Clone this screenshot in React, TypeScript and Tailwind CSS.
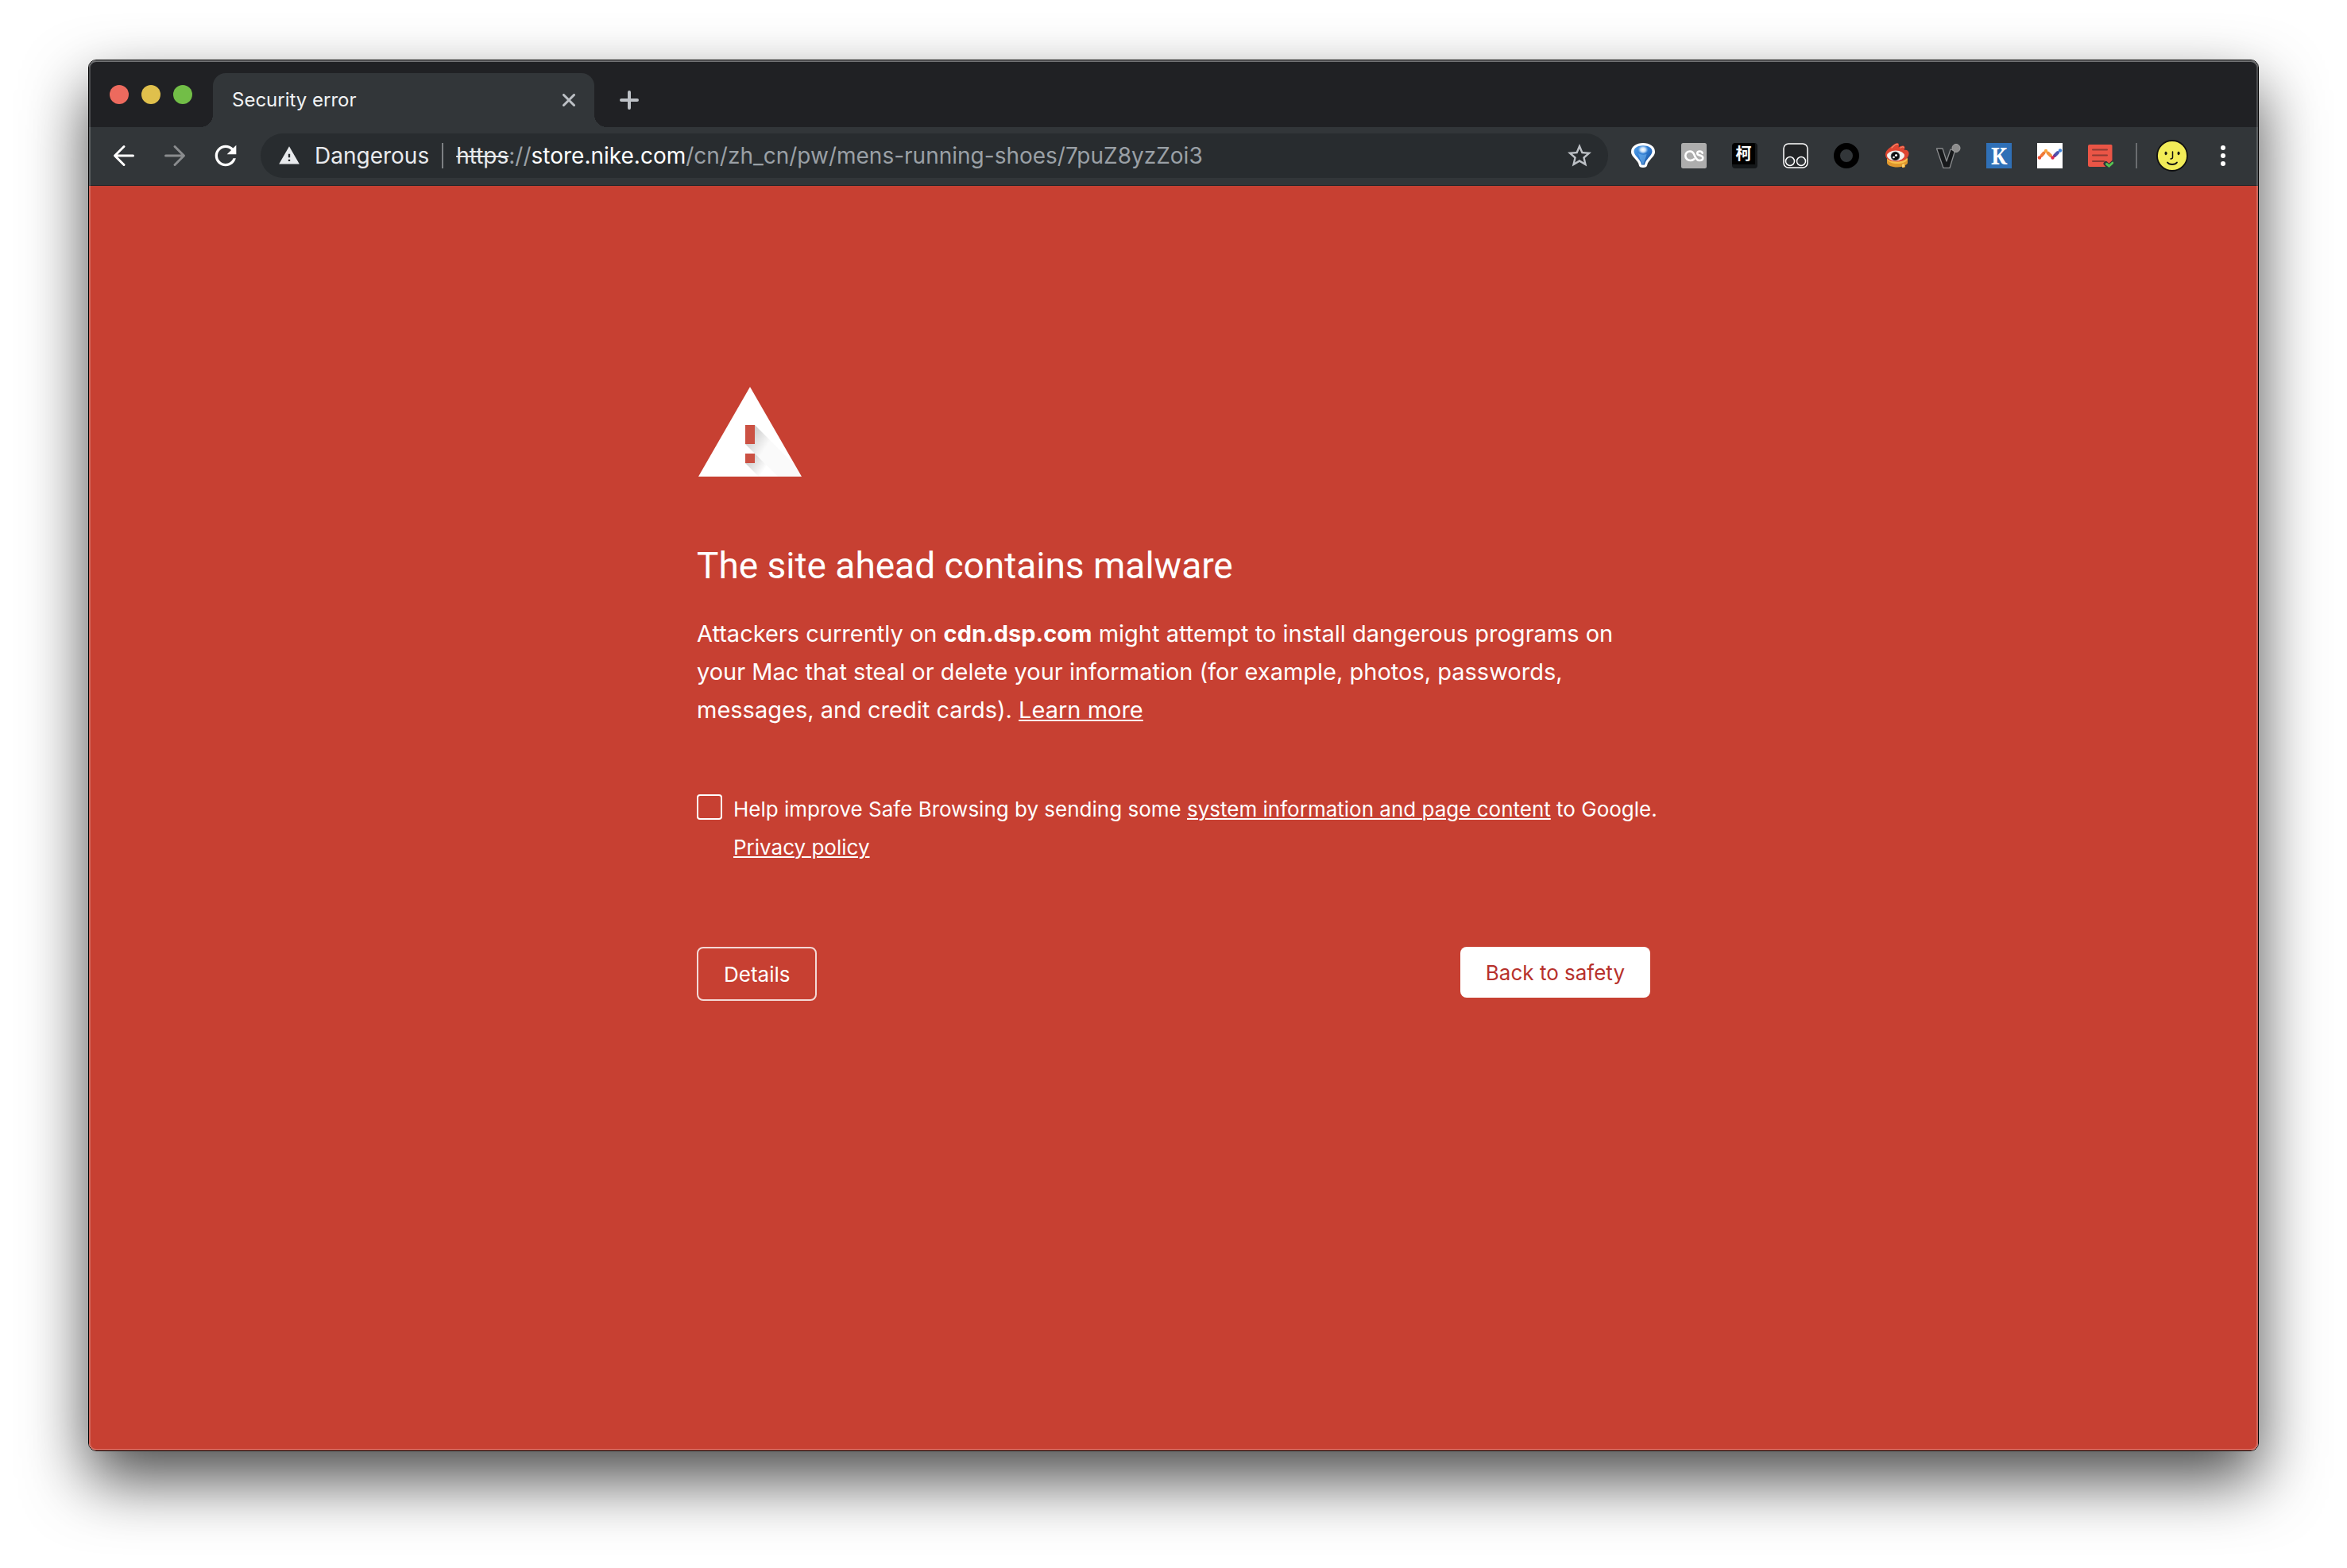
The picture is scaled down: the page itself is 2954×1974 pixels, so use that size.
import type { ReactNode } from "react";

function IconButton({ label, children }: { label: string; children: ReactNode }) {
  return (
    <button type="button" aria-label={label} className="size-8 shrink-0">
      {children}
    </button>
  );
}

function TabStrip() {
  return (
    <div className="flex h-[84px] bg-[#202124] pt-4 pl-[26px]">
      <div className="mr-[26px] flex items-center gap-4 pb-[14px]">
        <button type="button" aria-label="Close window" className="size-6 rounded-full bg-[#ed6a5e]" />
        <button type="button" aria-label="Minimize window" className="size-6 rounded-full bg-[#e0c04c]" />
        <button type="button" aria-label="Zoom window" className="size-6 rounded-full bg-[#72be47]" />
      </div>
      <div className="relative flex w-[480px] items-center justify-between rounded-t-2xl bg-[#323639] px-6 text-[#f1f3f4] before:absolute before:bottom-0 before:-left-4 before:size-4 before:bg-[radial-gradient(circle_at_0_0,transparent_16px,#323639_16px)] after:absolute after:-right-4 after:bottom-0 after:size-4 after:bg-[radial-gradient(circle_at_100%_0,transparent_16px,#323639_16px)]">
        <span className="text-[24px]">Security error</span>
        <button type="button" aria-label="Close tab" className="size-4">
          <svg viewBox="0 0 16 16" fill="none" stroke="#bdc1c6" strokeWidth="3" strokeLinecap="round">
            <path d="M1.5 1.5l13 13M14.5 1.5l-13 13" />
          </svg>
        </button>
      </div>
      <button type="button" aria-label="New tab" className="ml-8 size-6 self-center">
        <svg viewBox="0 0 24 24" fill="none" stroke="#bdc1c6" strokeWidth="4" strokeLinecap="round">
          <path d="M12 2v20M2 12h20" />
        </svg>
      </button>
    </div>
  );
}

function AddressBar() {
  return (
    <div className="flex h-14 min-w-0 flex-1 items-center gap-4 rounded-full bg-[#282c2f] pr-[18px] pl-[22px] text-[28px] whitespace-nowrap">
      <button type="button" className="flex items-center gap-[18px] text-[#e8eaed]">
        <svg viewBox="0 0 24 24" className="size-7" fill="currentColor">
          <path d="M1 21h22L12 2 1 21zm12-3h-2v-2h2v2zm0-4h-2v-4h2v4z" />
        </svg>
        Dangerous
      </button>
      <span className="h-8 w-[2px] bg-[#7d8083]" />
      <div role="textbox" aria-label="Address" tabIndex={0} className="min-w-0 flex-1 overflow-hidden text-[#9aa0a6]">
        <span className="text-[#e8eaed] line-through decoration-2">https</span>
        ://
        <span className="text-white">store.nike.com</span>
        /cn/zh_cn/pw/mens-running-shoes/7puZ8yzZoi3
      </div>
      <button type="button" aria-label="Bookmark this page" className="size-9 shrink-0">
        <svg viewBox="0 0 24 24" fill="#bdc1c6">
          <path d="M22 9.24l-7.19-.62L12 2 9.19 8.63 2 9.24l5.46 4.73L5.82 21 12 17.27 18.18 21l-1.63-7.03L22 9.24zM12 15.4l-3.76 2.27 1-4.28-3.32-2.88 4.38-.38L12 6.1l1.71 4.04 4.38.38-3.32 2.88 1 4.28L12 15.4z" />
        </svg>
      </button>
    </div>
  );
}

function Extensions() {
  return (
    <div className="flex gap-8">
      <IconButton label="Proxy switcher">
        <svg viewBox="0 0 32 32">
          <defs>
            <linearGradient id="balloon" x1="0" y1="0" x2="1" y2="1">
              <stop offset="0" stopColor="#4f9ce6" />
              <stop offset="0.5" stopColor="#2f7bd0" />
              <stop offset="1" stopColor="#0d3f86" />
            </linearGradient>
            <radialGradient id="shine">
              <stop offset="0" stopColor="#fff" />
              <stop offset="0.5" stopColor="#dcecfb" stopOpacity="0.9" />
              <stop offset="1" stopColor="#9cc8f2" stopOpacity="0" />
            </radialGradient>
          </defs>
          <path d="M16 0C8 0 1 4 1 11c0 4 2.500 6 5 9 2 2.500 4.500 5 4.800 8 .2 2 2.200 3 5.200 3s5-1 5.200-3c.3-3 2.800-5.500 4.800-8 2.500-3 5-5 5-9 0-7-7-11-15-11z" fill="#fff" />
          <path d="M16 3.200C9.500 3.200 4.500 6 4.500 10.500c0 3 2 5 4.500 8 2.500 3 4.500 5.500 5 9h4c.5-3.500 2.500-6 5-9 2.500-3 4.500-5 4.500-8 0-4.500-5-7.300-11.500-7.300z" fill="url(#balloon)" />
          <path d="M10 13c1 5 3 9 5 14l2-1c1-5 3-8 3.500-12-3 1-7.500 1-10.500-1z" fill="#6fb3ee" opacity="0.6" />
          <ellipse cx="16" cy="8.500" rx="6.500" ry="5.500" fill="url(#shine)" />
        </svg>
      </IconButton>
      <IconButton label="Last.fm scrobbler">
        <svg viewBox="0 0 32 32" fill="none" stroke="#fff" strokeWidth="2.600" strokeLinecap="round">
          <rect width="32" height="32" rx="2.500" fill="#adadad" stroke="none" />
          <path d="M16 20.500c-1.200 1.100-2.500 1.500-4.500 1.500C8 22 5.300 19.500 5.300 16s2.700-5.500 5.700-5.500c3.500 0 4.500 2 5.500 4.500 1.200 3.500 2.500 7 6.500 7 2.500 0 4.300-1 4.300-3.200 0-2.300-1.800-2.700-3.800-3.200-1.900-.4-3.300-.9-3.300-2.600 0-1.600 1.400-2.500 3.100-2.500 1.800 0 2.900.7 3.400 2.100" />
        </svg>
      </IconButton>
      <IconButton label="柯">
        <span className="flex size-8 items-center justify-center rounded-sm border-r-[3px] border-b-[5px] border-[#15181a] bg-black pb-px font-['Noto_Sans_CJK_SC',sans-serif] text-[20px] leading-none font-bold text-white">柯</span>
      </IconButton>
      <IconButton label="Tampermonkey">
        <svg viewBox="0 0 32 32" fill="#323639" stroke="#fff">
          <rect x="1" y="1" width="30" height="30" rx="6" fill="#222426" strokeWidth="1.500" />
          <circle cx="9" cy="23" r="5.500" strokeWidth="1.500" />
          <circle cx="23" cy="23" r="5.500" strokeWidth="1.500" />
        </svg>
      </IconButton>
      <IconButton label="Recorder">
        <svg viewBox="0 0 32 32">
          <circle cx="16" cy="16" r="12" fill="none" stroke="#000" strokeWidth="8" />
        </svg>
      </IconButton>
      <IconButton label="Weibo">
        <svg viewBox="0 0 32 32">
          <path d="M3 20v5c0 3 6 5.500 13 5.500 2 0 4-.2 6-.8l1.500 1.500 2.500-1V28c2-1 3-2 3-3v-5z" fill="#e0972c" />
          <path d="M3 20c1 4 7 6 13 6s12-2 13-6l-1-2H4z" fill="#f7c04c" />
          <path d="M22 27v4l3-1v-4z" fill="#f9cf6a" />
          <path d="M1 15c0-5 4-8 8-11 3-2.500 6-4.500 8-3.500 1.500.8 1 3 .5 5C20 3.500 24 2.500 25 4.500c.8 1.500.2 3-.5 4.500 3-1 5.500.5 6 3.500.5 5-4 11-14.500 11C7 23.500 1 20 1 15z" fill="#de4632" />
          <path d="M9 6c3-3 6-5 7.500-4.500M20 6c2-1.500 3.500-1.500 4-.5" stroke="#f58a6e" strokeWidth="1.300" fill="none" strokeLinecap="round" />
          <ellipse cx="14" cy="16" rx="11" ry="6.500" fill="#f4f1ee" />
          <circle cx="13.500" cy="16.500" r="5.800" fill="#4b4f55" />
          <circle cx="13.500" cy="16.500" r="4.800" fill="#0c0d0f" />
          <circle cx="14.500" cy="15.500" r="1.500" fill="#fff" />
          <circle cx="11.500" cy="18" r="1.300" fill="#fff" />
        </svg>
      </IconButton>
      <IconButton label="Vimium">
        <svg viewBox="0 0 32 32">
          <path d="M1.500 7h7.500l5 16 5-15L24.500 10l-6.500 21.500h-8z" fill="#17191b" stroke="#8b8d8f" strokeWidth="1.300" strokeLinejoin="round" />
          <circle cx="26" cy="6.500" r="5" fill="#8c8c8c" stroke="#a3a3a3" />
        </svg>
      </IconButton>
      <IconButton label="K">
        <span className="flex size-8 items-center justify-center bg-[#2f70b7] font-['Noto_Serif','DejaVu_Serif',serif] text-[28px] leading-none font-bold text-white">K</span>
      </IconButton>
      <IconButton label="Trend chart">
        <svg viewBox="0 0 32 32">
          <rect width="32" height="32" fill="#fff" />
          <g strokeWidth="4" fill="none" strokeLinecap="round">
            <path d="M5.500 16l3-3.500" stroke="#f07a38" />
            <path d="M13.500 12.500l3.500 3.500" stroke="#f2913c" />
            <path d="M22 16l1.500-1.500" stroke="#6b3a94" />
            <path d="M24 14l2-2" stroke="#4a55b0" />
          </g>
          <circle cx="3" cy="18.500" r="2.200" fill="#ee4f34" />
          <circle cx="11" cy="10" r="2.200" fill="#f8a63c" />
          <circle cx="19.500" cy="18.500" r="2.200" fill="#dc2a50" />
          <circle cx="29" cy="9.500" r="2.200" fill="#3f86dc" />
        </svg>
      </IconButton>
      <IconButton label="Reading list">
        <svg viewBox="0 0 32 32" fill="none" strokeLinecap="round">
          <path d="M2 2h27a1.500 1.500 0 011.500 1.500V22L22 30H2a2 2 0 01-2-2V4a2 2 0 012-2z" fill="#ea5546" />
          <path d="M6 8.500h18M6 15.500h18M6 23h14" stroke="#8d3a33" strokeWidth="2" />
          <path d="M22.500 26l4 4 6-5.500" stroke="#323639" strokeWidth="6" />
          <path d="M23.500 26.500l3 2.500 4.500-4" stroke="#56c053" strokeWidth="3" />
        </svg>
      </IconButton>
    </div>
  );
}

function Toolbar() {
  return (
    <div className="flex items-center gap-7 border-b border-[#232629] bg-[#323639] px-7 pt-2 pb-[9px]">
      <div className="flex gap-8">
        <IconButton label="Back">
          <svg viewBox="0 0 32 32" fill="none" stroke="#fff" strokeWidth="3" strokeLinecap="round" strokeLinejoin="round">
            <path d="M27.500 16H5M16 4.500L4.500 16 16 27.500" />
          </svg>
        </IconButton>
        <IconButton label="Forward">
          <svg viewBox="0 0 32 32" fill="none" stroke="#8a8c8e" strokeWidth="3" strokeLinecap="round" strokeLinejoin="round">
            <path d="M4.500 16H27M16 4.500L27.500 16 16 27.500" />
          </svg>
        </IconButton>
        <IconButton label="Reload">
          <svg viewBox="2.400 2.400 19.200 19.200" fill="#fff">
            <path d="M17.650 6.350C16.200 4.900 14.210 4 12 4c-4.420 0-7.990 3.580-7.990 8s3.570 8 7.990 8c3.730 0 6.840-2.550 7.730-6h-2.080c-.82 2.330-3.040 4-5.650 4-3.310 0-6-2.690-6-6s2.690-6 6-6c1.660 0 3.140.69 4.220 1.780L13 11h7V4l-2.350 2.350z" />
          </svg>
        </IconButton>
      </div>
      <AddressBar />
      <Extensions />
      <div className="flex items-center gap-6">
        <span className="h-8 w-[2px] bg-[#6a6d70]" />
        <button type="button" aria-label="Profile" className="size-10">
          <svg viewBox="0 0 40 40" fill="none" stroke="#111" strokeLinecap="round">
            <circle cx="20" cy="20" r="19" fill="#f2ec58" strokeWidth="1.800" />
            <path d="M14 28.500c1 1.500 3.500 2.500 6 2.500s5-1 6-2.500" strokeWidth="1.800" />
            <path d="M20.500 15v7c0 1.500-1 2-2.500 2" strokeWidth="1.500" />
            <ellipse cx="12" cy="17" rx="1" ry="2" fill="#111" strokeWidth="1" />
            <ellipse cx="28" cy="17" rx="1" ry="2" fill="#111" strokeWidth="1" />
          </svg>
        </button>
      </div>
      <IconButton label="Menu">
        <svg viewBox="0 0 32 32" fill="#fff">
          <circle cx="16" cy="6" r="3" />
          <circle cx="16" cy="16" r="3" />
          <circle cx="16" cy="26" r="3" />
        </svg>
      </IconButton>
    </div>
  );
}

function WarningTriangle() {
  return (
    <svg viewBox="0 0 132 114" className="h-[114px] w-[132px]" aria-hidden="true">
      <defs>
        <linearGradient id="cast" gradientUnits="userSpaceOnUse" x1="62" y1="62" x2="86" y2="78">
          <stop offset="0" stopColor="#000" stopOpacity="0.220" />
          <stop offset="1" stopColor="#000" stopOpacity="0.020" />
        </linearGradient>
        <linearGradient id="castDot" gradientUnits="userSpaceOnUse" x1="64" y1="92" x2="84" y2="106">
          <stop offset="0" stopColor="#000" stopOpacity="0.200" />
          <stop offset="1" stopColor="#000" stopOpacity="0" />
        </linearGradient>
      </defs>
      <path d="M67 0l65 113H2z" fill="#fff" />
      <path d="M73 48l48 48 11 17h-30L61 72z" fill="url(#cast)" />
      <path d="M73 84l29 29H78L61 96z" fill="url(#castDot)" />
      <path d="M61 48h12v24H61zM61 84h12v12H61z" fill="#cb5143" />
    </svg>
  );
}

function MalwarePage() {
  return (
    <main className="flex-1 bg-[#c74032] px-10 pt-[253px] pb-16 text-white">
      <div className="mx-auto max-w-[1200px]">
        <WarningTriangle />
        <h1 className="mt-[83px] font-[Roboto,sans-serif] text-[46px] leading-[56px]">The site ahead contains malware</h1>
        <p className="mt-[34px] text-[29px] leading-[48px]">
          Attackers currently on <strong>cdn.dsp.com</strong> might attempt to install dangerous programs on your Mac
          that steal or delete your information (for example, photos, passwords, messages, and credit cards).{" "}
          <a href="#learn-more" className="underline decoration-2 underline-offset-2">Learn more</a>
        </p>
        <div className="mt-[77px] flex gap-[14px] text-[26px] leading-[48px]">
          <input
            id="opt-in"
            type="checkbox"
            className="mt-[5px] size-8 shrink-0 appearance-none rounded border-2 border-white checked:bg-white"
          />
          <label htmlFor="opt-in" className="whitespace-nowrap">
            Help improve Safe Browsing by sending some{" "}
            <a href="#content" className="underline decoration-2 underline-offset-2">system information and page content</a> to Google.
            <br />
            <a href="#privacy" className="underline decoration-2 underline-offset-2">Privacy policy</a>
          </label>
        </div>
        <div className="mt-[101px] flex items-start justify-between text-[26px]">
          <button type="button" className="h-[68px] rounded-lg border-2 border-white/80 px-8">Details</button>
          <button type="button" className="h-16 rounded-lg bg-white px-8 text-[#b7312c]">Back to safety</button>
        </div>
      </div>
    </main>
  );
}

export default function App() {
  return (
    <div className="flex min-h-screen flex-col bg-white px-[111px] pt-[75px] pb-[147px] font-[Inter,sans-serif]">
      <div className="relative flex flex-1 flex-col overflow-hidden rounded-[10px] border border-black shadow-[0_36px_80px_rgba(0,0,0,0.7)] after:pointer-events-none after:absolute after:inset-0 after:rounded-[9px] after:shadow-[inset_0_0_0_2px_rgba(255,255,255,0.2),inset_0_2px_0_rgba(255,255,255,0.2)]">
        <TabStrip />
        <Toolbar />
        <MalwarePage />
      </div>
    </div>
  );
}
